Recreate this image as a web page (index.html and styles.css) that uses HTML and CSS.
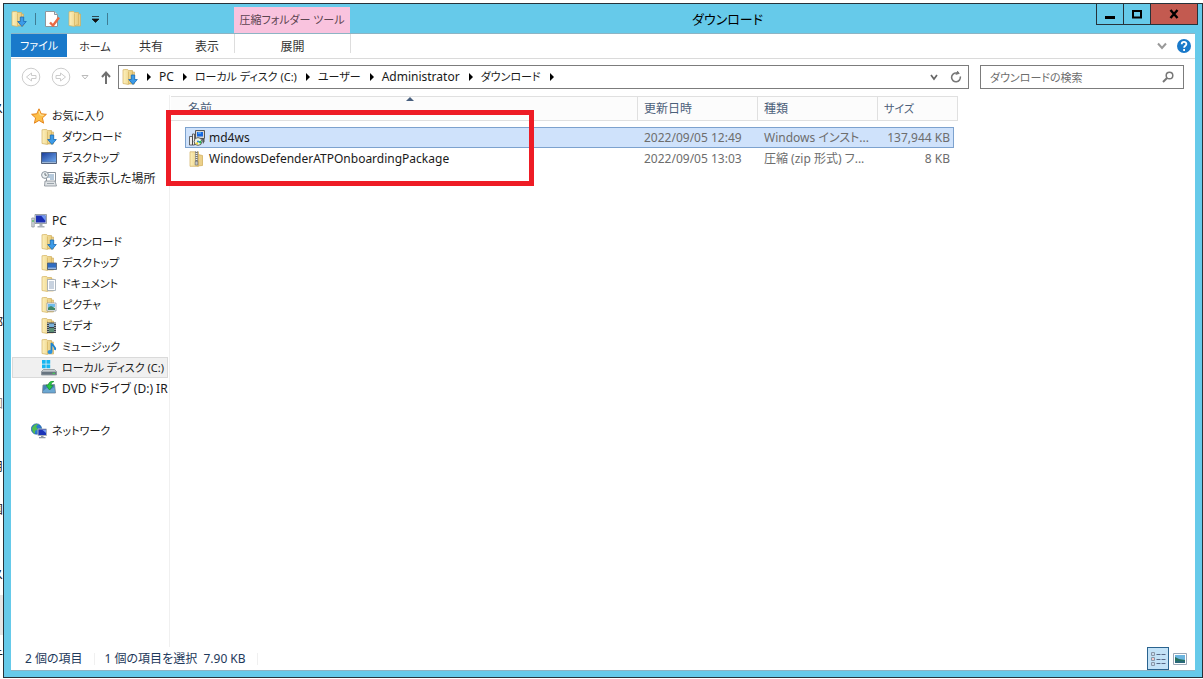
FILE: index.html
```html
<!DOCTYPE html>
<html lang="ja">
<head>
<meta charset="utf-8">
<title>ダウンロード</title>
<link rel="stylesheet" href="styles.css">
</head>
<body>
<svg class="defs" aria-hidden="true">
  <defs>
    <linearGradient id="gold" x1="0" x2="1"><stop offset="0" stop-color="#fdf1bd"/><stop offset="1" stop-color="#e8cb7b"/></linearGradient>
    <linearGradient id="screen" x1="0" y1="0" x2="1" y2="1"><stop offset="0" stop-color="#1c3f9c"/><stop offset="1" stop-color="#6fa8ec"/></linearGradient>
    <symbol id="folder" viewBox="0 0 16 16"><path d="M7 3h5.500v12H7z" fill="#ecd089" stroke="#cfaa55" stroke-width=".6"/><path d="M1 .8l4.500-.5 1 1.200h4V14H8l-1.500 1.500L1 14.500z" fill="url(#gold)" stroke="#d3b05e" stroke-width=".7"/><path d="M6.500 2.500v12.500" stroke="#d8b663" stroke-width=".8"/></symbol>
    <symbol id="downloads" viewBox="0 0 16 16"><use href="#folder"/><path d="M9.300 6h3.400v4.500h2.600L11 15.500l-4.300-5h2.600z" fill="#3c9be8" stroke="#1669b8" stroke-width=".8"/></symbol>
    <symbol id="desktop" viewBox="0 0 16 16"><path d="M.5 2.500h15v11H.5z" fill="#5b7fae" stroke="#52617b"/><path d="M1 3h14v8.500H1z" fill="url(#screen)"/><path d="M1 12.500h14" stroke="#9db6d6"/></symbol>
    <symbol id="recent" viewBox="0 0 16 16"><path d="M5.500 1.500h9v9h-9z" fill="#fff" stroke="#8b949c"/><path d="M7 4h6M7 6h6M9 8h4" stroke="#6d94b8"/><path d="M4 10h10l1.500 5h-12z" fill="#dfe3e6" stroke="#858d94" stroke-width=".8"/><path d="M6 12.500h7" stroke="#9aa3aa"/><circle cx="4" cy="4" r="3.400" fill="#eef3f5" stroke="#8b949c"/><path d="M4 2v2.200h1.800" fill="none" stroke="#4b555e" stroke-width=".8"/></symbol>
    <symbol id="star" viewBox="0 0 16 16"><path d="M8 .8l2.200 5 5.200.5-4 3.600 1.200 5.300L8 12.400l-4.600 2.800 1.200-5.300-4-3.600 5.200-.5z" fill="#fcc04a" stroke="#e5851d"/><path d="M8 3l1.300 4 3.500.3" fill="none" stroke="#ffe6a4"/></symbol>
    <symbol id="pc" viewBox="0 0 16 16"><path d="M.8 5h2.400v9H.8z" fill="#d4d9dd" stroke="#858e96" stroke-width=".7"/><path d="M2 7v2" stroke="#2fb33b"/><path d="M4 1.500h11.500v9H4z" fill="#d6dae0" stroke="#858e96" stroke-width=".8"/><path d="M5 2.500h9.500v7H5z" fill="#1b2fb4"/><path d="M10 2.500h4.500V8z" fill="#6f97f0"/><path d="M8.500 11h3v2h2v1.500h-7V13h2z" fill="#a9b1b8"/></symbol>
    <symbol id="folder-desktop" viewBox="0 0 16 16"><use href="#folder"/><path d="M6.500 8h9v6.500h-9z" fill="#2f6cc2" stroke="#4b5a70" stroke-width=".8"/><path d="M7 13.200h8" stroke="#bed2ea"/></symbol>
    <symbol id="documents" viewBox="0 0 16 16"><use href="#folder"/><path d="M6.500 3.500h8v11h-8z" fill="#fff" stroke="#9aa6b1" stroke-width=".8"/><path d="M8 6h5M8 8h5M8 10h5M8 12h5" stroke="#7690ae" stroke-width=".8"/></symbol>
    <symbol id="pictures" viewBox="0 0 16 16"><use href="#folder"/><path d="M6 6h9v8H6z" fill="#fff" stroke="#8f9ba6" stroke-width=".8"/><path d="M7 7h7v3H7z" fill="#6fbdec"/><path d="M7 10.500l3-1.500 4 2v2H7z" fill="#418769"/></symbol>
    <symbol id="videos" viewBox="0 0 16 16"><use href="#folder"/><path d="M6 4.500h9V15H6z" fill="#38424b"/><path d="M8 5.500h5V9H8z" fill="#78b0da"/><path d="M8 10h5v4H8z" fill="#5a8f75"/><path d="M7 5v10M14 5v10" stroke="#fff" stroke-dasharray="1 1"/></symbol>
    <symbol id="music" viewBox="0 0 16 16"><use href="#folder"/><path d="M10.500 12.500V4c1 3 4.500 3 3.500 7" fill="none" stroke="#1e83d0" stroke-width="1.800"/><ellipse cx="9" cy="13" rx="2.500" ry="2" fill="#2b94e2"/></symbol>
    <symbol id="disk" viewBox="0 0 16 16"><path d="M1 0h3.700v3.800H1zM5.400 0H9.200v3.800H5.400zM1 4.500h3.700v3.800H1zM5.400 4.500h3.800v3.800H5.400z" fill="#16b6f2"/><path d="M2.500 9.500h11l2 2v3.500H.5v-3.500z" fill="#c3c9cd" stroke="#7d868d" stroke-width=".7"/><path d="M.8 11.700h14.400v3H.8z" fill="#687580"/><path d="M11.500 13.300H14" stroke="#3ce04d"/></symbol>
    <symbol id="dvd" viewBox="0 0 16 16"><path d="M2 4l11.500-.5 1 8.500h-13z" fill="#4682b8" stroke="#758492" stroke-width=".8"/><path d="M2 10l4-3 3 2 4.500-3 .5 5.500H2z" fill="#6ca8d2"/><path d="M12.500 0C9 0 7.500 2 7.300 4H5l3.500 5L12 4.500H9.800C10 2.500 11 1.200 12.500 1z" fill="#28c644" stroke="#158c2c" stroke-width=".6"/></symbol>
    <symbol id="network" viewBox="0 0 16 16"><circle cx="5.500" cy="6" r="5.200" fill="#2a78d2" stroke="#1d5795" stroke-width=".6"/><path d="M1 5c2-4 5-4 6-4L5 4l2 2-3 2v3C2 10 1 8 1 5" fill="#52bd50"/><path d="M7 6h8.500v6.500H7z" fill="#1b34b8" stroke="#aab2bb"/><path d="M11.500 7H15v3z" fill="#759af0"/><path d="M10 13h2.500v1h2v1.300H8V14h2z" fill="#8f98a1"/></symbol>
    <symbol id="properties" viewBox="0 0 16 16"><path d="M1.500.5h9l3 3v12h-12z" fill="#fff" stroke="#8e969c"/><path d="M10.500.5v3h3" fill="#e6eaec" stroke="#8e969c"/><path d="M6 11.500l3 3 6-8" fill="none" stroke="#ec6a43" stroke-width="2.400"/></symbol>
    <symbol id="msi" viewBox="0 0 16 16"><path d="M6.500.5h9v8h-9z" fill="#d6d6d6" stroke="#555"/><path d="M8 2h6v4.500H8z" fill="#1567e0"/><path d="M9 3h3" stroke="#7fd4ff"/><path d="M.5 6.500h3v8.500h-3zM3.500 4h2v11h-2z" fill="#eee" stroke="#444" stroke-width=".8"/><circle cx="9" cy="11.500" r="3.900" fill="#f0f5e6" stroke="#444" stroke-width=".8"/><path d="M9 11.500l3.500-1-1 3.500z" fill="#1fbb55"/><path d="M9 11.500l-3 2 3 1.500z" fill="#f2d43c"/><circle cx="9" cy="11.500" r="1" fill="#267bd8"/><path d="M13 9h2.500v2.500L14 14z" fill="#555"/></symbol>
    <symbol id="zip" viewBox="0 0 16 16"><path d="M9 3.500l4.500 1v10L8 15z" fill="#ecd089" stroke="#cfaa55" stroke-width=".7"/><path d="M1 .8h8.500v14.500H1z" fill="url(#gold)" stroke="#d3b05e" stroke-width=".7"/><path d="M7.500 0v11" stroke="#767676" stroke-width="2.600"/><path d="M7.500 0v11" stroke="#eee" stroke-width="1.600" stroke-dasharray="1 1"/><path d="M6.200 10.500h2.600V14H6.200z" fill="#c4c8cb" stroke="#666" stroke-width=".6"/></symbol>
  </defs>
</svg>

<div class="behind" aria-hidden="true">
  <span class="sliver s1">ス</span><span class="sliver s2">部</span><span class="sliver s3">回</span>
  <span class="sliver s4">用</span><span class="sliver s5">国</span><span class="sliver s6">ス</span>
  <span class="band"></span><span class="sliver s7">テ</span>
</div>

<div class="window">
  <header class="titlebar">
    <div class="quick">
      <svg class="icon"><use href="#downloads"/></svg>
      <i class="bar"></i>
      <button aria-label="プロパティ"><svg class="icon"><use href="#properties"/></svg></button>
      <button aria-label="新しいフォルダー"><svg class="icon"><use href="#folder"/></svg></button>
      <button aria-label="カスタマイズ"><svg width="7" height="7" viewBox="0 0 7 7"><path d="M0 .5h7M0 3h7L3.500 6.500z" fill="#111" stroke="#111" stroke-width=".7"/></svg></button>
      <i class="bar"></i>
    </div>
    <div class="context-title">圧縮フォルダー ツール</div>
    <h1>ダウンロード</h1>
    <div class="captions">
      <button aria-label="最小化"><svg width="10" height="10" viewBox="0 0 10 10"><path d="M0 8.500h10" stroke="#000" stroke-width="3"/></svg></button>
      <button aria-label="最大化"><svg width="10" height="10" viewBox="0 0 10 10"><path d="M1 2h8v6.500H1z" fill="none" stroke="#000" stroke-width="2"/></svg></button>
      <button class="close" aria-label="閉じる"><svg width="10" height="10" viewBox="0 0 10 10"><path d="M1.500 1l7 8M8.500 1l-7 8" stroke="#000" stroke-width="2.400"/></svg></button>
    </div>
  </header>

  <div class="client">
    <nav class="ribbon">
      <button class="file">ファイル</button>
      <button class="kana">ホーム</button>
      <button>共有</button>
      <button>表示</button>
      <button class="extract">展開</button>
      <div class="ribbon-end">
        <button aria-label="リボンの展開"><svg width="10" height="8" viewBox="0 0 10 8"><path d="M1 1.500L5 6l4-4.500" fill="none" stroke="#999" stroke-width="2"/></svg></button>
        <button aria-label="ヘルプ"><svg width="14" height="14" viewBox="0 0 14 14"><circle cx="7" cy="7" r="7" fill="#1979ca"/><path d="M4.700 5.300C4.700 2.200 9.400 2.300 9.400 5c0 1.700-2.300 1.800-2.300 3.800M7.100 10v2" fill="none" stroke="#fff" stroke-width="1.800"/></svg></button>
      </div>
    </nav>

    <div class="navbar">
      <div class="history">
        <button aria-label="戻る"><svg width="20" height="20" viewBox="0 0 20 20" fill="none" stroke="#ccc"><circle cx="10" cy="10" r="8.800"/><path d="M15 8.500v3h-4.500v2.500L5.500 10l5-4v2.500z"/></svg></button>
        <button aria-label="進む"><svg width="20" height="20" viewBox="0 0 20 20" fill="none" stroke="#ccc"><circle cx="10" cy="10" r="8.800"/><path d="M5 8.500v3h4.500v2.500l5-4-5-4v2.500z"/></svg></button>
        <button aria-label="最近表示した場所"><svg width="8" height="5" viewBox="0 0 8 5"><path d="M1 .5h6L4 4z" fill="none" stroke="#bbb"/></svg></button>
        <button class="up" aria-label="上へ"><svg width="10" height="13" viewBox="0 0 10 13"><path d="M5 13V2M1 6l4-4.500L9 6" fill="none" stroke="#707070" stroke-width="2"/></svg></button>
      </div>
      <div class="address">
        <svg class="icon"><use href="#downloads"/></svg>
        <i class="arrow"></i><a href="#">PC</a>
        <i class="arrow"></i><a class="kana" href="#">ローカル ディスク (C:)</a>
        <i class="arrow"></i><a class="kana" href="#">ユーザー</a>
        <i class="arrow"></i><a href="#">Administrator</a>
        <i class="arrow"></i><a class="kana" href="#">ダウンロード</a>
        <i class="arrow"></i>
        <div class="address-end">
          <button aria-label="履歴"><svg width="8" height="7" viewBox="0 0 8 7"><path d="M1 1l3 4 3-4" fill="none" stroke="#666" stroke-width="1.700"/></svg></button>
          <button aria-label="更新"><svg width="12" height="12" viewBox="0 0 12 12"><path d="M10.300 5.500A4.400 4.400 0 1 1 6.500 2H9" fill="none" stroke="#777" stroke-width="1.600"/><path d="M6.500 0v5L10 2z" fill="#777" transform="rotate(25 8 2)"/></svg></button>
        </div>
      </div>
      <label class="search">
        <input class="kana" type="text" placeholder="ダウンロードの検索" aria-label="ダウンロードの検索">
        <svg width="12" height="12" viewBox="0 0 12 12"><circle cx="7.500" cy="4.500" r="3.300" fill="none" stroke="#777" stroke-width="1.500"/><path d="M5 7l-4 4" stroke="#777" stroke-width="2"/></svg>
      </label>
    </div>

    <div class="main">
      <aside class="tree">
        <ul>
          <li class="kana"><svg class="icon"><use href="#star"/></svg>お気に入り</li>
          <li class="child kana"><svg class="icon"><use href="#downloads"/></svg>ダウンロード</li>
          <li class="child kana"><svg class="icon"><use href="#desktop"/></svg>デスクトップ</li>
          <li class="child"><svg class="icon"><use href="#recent"/></svg>最近表示した場所</li>
        </ul>
        <ul>
          <li><svg class="icon"><use href="#pc"/></svg>PC</li>
          <li class="child kana"><svg class="icon"><use href="#downloads"/></svg>ダウンロード</li>
          <li class="child kana"><svg class="icon"><use href="#folder-desktop"/></svg>デスクトップ</li>
          <li class="child kana"><svg class="icon"><use href="#documents"/></svg>ドキュメント</li>
          <li class="child kana"><svg class="icon"><use href="#pictures"/></svg>ピクチャ</li>
          <li class="child kana"><svg class="icon"><use href="#videos"/></svg>ビデオ</li>
          <li class="child kana"><svg class="icon"><use href="#music"/></svg>ミュージック</li>
          <li class="child kana current"><svg class="icon"><use href="#disk"/></svg>ローカル ディスク (C:)</li>
          <li class="child"><svg class="icon"><use href="#dvd"/></svg>DVD ドライブ (D:) IR</li>
        </ul>
        <ul>
          <li class="kana"><svg class="icon"><use href="#network"/></svg>ネットワーク</li>
        </ul>
      </aside>

      <section class="files">
        <table>
          <colgroup><col class="c-edge"><col class="c-name"><col class="c-date"><col class="c-type"><col class="c-size"><col class="c-tail"></colgroup>
          <thead>
            <tr>
              <th colspan="2" class="h-name">名前<svg class="sort" width="8" height="4" viewBox="0 0 8 4"><path d="M0 4l4-4 4 4z" fill="#49607f"/></svg></th>
              <th>更新日時</th><th>種類</th><th colspan="2" class="kana">サイズ</th>
            </tr>
          </thead>
          <tbody>
            <tr class="selected">
              <td class="edge"></td>
              <td class="name"><span><svg class="icon"><use href="#msi"/></svg>md4ws</span></td>
              <td>2022/09/05 12:49</td><td>Windows インスト...</td><td class="size">137,944 KB</td><td class="edge"></td>
            </tr>
            <tr>
              <td class="edge"></td>
              <td class="name"><span><svg class="icon"><use href="#zip"/></svg>WindowsDefenderATPOnboardingPackage</span></td>
              <td>2022/09/05 13:03</td><td>圧縮 (zip 形式) フ...</td><td class="size">8 KB</td><td class="edge"></td>
            </tr>
          </tbody>
        </table>
        <div class="highlight"></div>
      </section>
    </div>

    <footer class="status">
      <span>2 個の項目</span>
      <span>1 個の項目を選択&nbsp; 7.90 KB</span>
      <div class="views">
        <button class="on" aria-label="詳細"><svg width="16" height="14" viewBox="0 0 16 14"><path d="M1.500.5h3v3h-3zM1.500 5.500h3v3h-3zM1.500 10.500h3v3h-3z" fill="#fff" stroke="#8897a8"/><path d="M2.500 2h1M2.500 12h1" stroke="#246ab0"/><path d="M2.500 7h1" stroke="#d22"/><path d="M6.500 2.500h4M11.500 2.500h4M6.500 7.500h4M11.500 7.500h4M6.500 11.500h4M11.500 11.500h4" stroke="#576887"/></svg></button>
        <button aria-label="大アイコン"><svg width="14" height="12" viewBox="0 0 14 12"><path d="M.5.500h13v11H.5z" fill="#fff" stroke="#99a6b6"/><path d="M2 2h10v8H2z" fill="#6bb5df"/><path d="M2 4l4 2 6 1v3H2z" fill="#26705e"/><path d="M2 9h10" stroke="#2b5e94"/></svg></button>
      </div>
    </footer>
  </div>
</div>
</body>
</html>
```
FILE: styles.css
```css
* { box-sizing: border-box; }

body {
  margin: 0;
  height: 100vh;
  padding: 3px 0 1px 3px;
  background: #fff;
  color: #1a1a1a;
  font: 12px/20px "Noto Sans", "Noto Sans CJK JP", sans-serif;
  font-feature-settings: "palt";
  overflow: hidden;
}

button {
  display: flex;
  align-items: center;
  justify-content: center;
  padding: 0;
  border: 0;
  background: none;
  color: inherit;
  font: inherit;
  font-feature-settings: inherit;
}

svg { display: block; flex: none; }
.icon { width: 16px; height: 16px; }
.defs { position: absolute; width: 0; height: 0; }

/* Edge of the page that shows beside the window */
.behind { position: absolute; left: 0; top: 0; width: 3px; height: 100%; overflow: hidden; }
.sliver { position: absolute; right: 0; line-height: 16px; }
.s1 { top: 101px; }
.s2 { top: 315px; }
.s3 { top: 396px; color: #888; }
.s4 { top: 459px; }
.s5 { top: 502px; }
.s6 { top: 567px; }
.s7 { top: 648px; }
.band { position: absolute; top: 595px; width: 3px; height: 40px; background: #e6e6e6; }

.window {
  display: flex;
  flex-direction: column;
  height: 100%;
  padding: 0 7px 6px 7px;
  border: 1px solid #26323a;
  background: #66caea;
  position: relative;
}

.titlebar {
  display: grid;
  grid-template-columns: 223px 116px 1fr;
  height: 29px;
  flex: none;
}
.quick { display: flex; align-items: center; gap: 8px; }
.quick .bar { width: 1px; height: 12px; background: #3f7d94; }
.context-title {
  margin-top: 3px;
  background: #f9c3de;
  color: #5c4450;
  font-size: 11px;
  line-height: 26px;
  text-align: center;
  white-space: nowrap;
}
.titlebar h1 {
  margin: 0;
  padding-right: 90px;
  color: #000;
  font-size: 13px;
  font-weight: 400;
  line-height: 30px;
  text-align: center;
}
.captions { position: absolute; right: 4px; top: -1px; display: flex; }
.captions button {
  width: 28px;
  height: 22px;
  margin-left: -1px;
  border: 1px solid #26323a;
}
.captions .close { width: 48px; background: #c35a50; }

.client {
  flex: 1;
  display: flex;
  flex-direction: column;
  min-height: 0;
  border-top: 1px solid #8db4c4;
  border-bottom: 1px solid #8db4c4;
  background: #fff;
}

.ribbon {
  display: flex;
  height: 25px;
  flex: none;
  border-bottom: 1px solid #dadada;
  color: #333;
}
.ribbon button { width: 56px; padding-top: 1px; }
.ribbon .file { height: 23px; background: #1979ca; color: #fff; }
.ribbon .extract {
  width: 117px;
  height: 19px;
  margin-left: -1px;
  padding-top: 6px;
  border: solid #ddd;
  border-width: 0 1px;
}
.ribbon-end { display: flex; align-items: center; gap: 10px; margin-left: auto; padding-right: 4px; }
.ribbon .ribbon-end button { width: auto; padding: 0; }

/* Labels made mostly of kana are set one step smaller */
.kana,
.ribbon .kana,
.files .kana,
.search .kana,
.ribbon .file { font-size: 11px; }

.navbar { display: flex; align-items: center; gap: 11px; height: 36px; flex: none; padding-right: 11px; }
.history { display: flex; align-items: center; gap: 10px; width: 96px; padding-left: 10px; }
.history .up { margin-left: 2px; }
.address {
  flex: 1;
  display: flex;
  align-items: center;
  height: 24px;
  padding: 0 6px 0 3px;
  border: 1px solid #7c7c7c;
  white-space: nowrap;
}
.address a { color: #1a1a1a; text-decoration: none; }
.arrow {
  margin: 0 8px 0 9px;
  border: solid transparent;
  border-width: 4px 0 4px 4px;
  border-left-color: #000;
}
.address-end { display: flex; gap: 12px; margin-left: auto; }
.search {
  display: flex;
  align-items: center;
  width: 204px;
  height: 24px;
  padding: 0 9px;
  border: 1px solid #7c7c7c;
}
.search input {
  flex: 1;
  min-width: 0;
  padding: 0;
  border: 0;
  outline: 0;
  background: none;
  font-family: inherit;
  font-feature-settings: inherit;
}
.search input::placeholder { color: #6d6d6d; opacity: 1; }

.main { flex: 1; display: flex; min-height: 0; }

.tree {
  width: 159px;
  padding: 10px 1px 0;
  border-right: 1px solid #f0f0f0;
  overflow: hidden;
}
.tree ul { margin: 0 0 21px; padding: 0; list-style: none; }
.tree li {
  display: flex;
  align-items: center;
  gap: 5px;
  height: 21px;
  padding-left: 19px;
  overflow: hidden;
  white-space: nowrap;
}
.tree .child { padding-left: 29px; }
.tree .current { padding-left: 28px; border: 1px solid #dadada; background: #f0f0f0; }

.files { position: relative; flex: 1; padding: 1px 0 0 1px; }
.files table { width: 787px; table-layout: fixed; border-collapse: separate; border-spacing: 0; }
.c-edge { width: 14px; }
.c-date, .c-type { width: 120px; }
.c-size { width: 76px; }
.c-tail { width: 4px; }
.files th {
  position: relative;
  height: 25px;
  padding: 0 6px;
  border: solid #e0e0e0;
  border-width: 1px 1px 1px 0;
  background: #fcfcfc;
  color: #4c607a;
  font-weight: 400;
  text-align: left;
}
.files .h-name { padding-left: 17px; }
.sort { position: absolute; top: 0; left: 235px; }
.files tbody::before { content: ""; display: block; height: 6px; }
.files td {
  height: 21px;
  padding: 0 6px;
  color: #6d6d6d;
  line-height: 19px;
  white-space: nowrap;
}
.files .edge { padding: 0; }
.files .name { padding: 0 4px; color: #1a1a1a; }
.name span { display: flex; align-items: center; gap: 4px; }
.files .size { padding: 0 4px 0 0; text-align: right; }
.selected td:not(.edge) { border: solid #7da2ce; border-width: 1px 0; background: #cfe2fb; }
.files .selected .name { border-left-width: 1px; padding-left: 3px; }
.files .selected .size { border-right-width: 1px; padding-right: 3px; }

.highlight {
  position: absolute;
  left: -4px;
  top: 15px;
  width: 368px;
  height: 76px;
  border: 5px solid #ee1c25;
}

.status {
  display: flex;
  align-items: center;
  height: 23px;
  flex: none;
  padding: 0 8px 0 14px;
  color: #1e395b;
}
.status span { padding-right: 11px; margin-right: 10px; border-right: 1px solid #f0f0f0; line-height: 12px; }
.views { display: flex; gap: 4px; margin-left: auto; }
.views button { height: 23px; }
.views .on { width: 22px; border: 1px solid #2a638f; background: #c3e2f7; }
```
